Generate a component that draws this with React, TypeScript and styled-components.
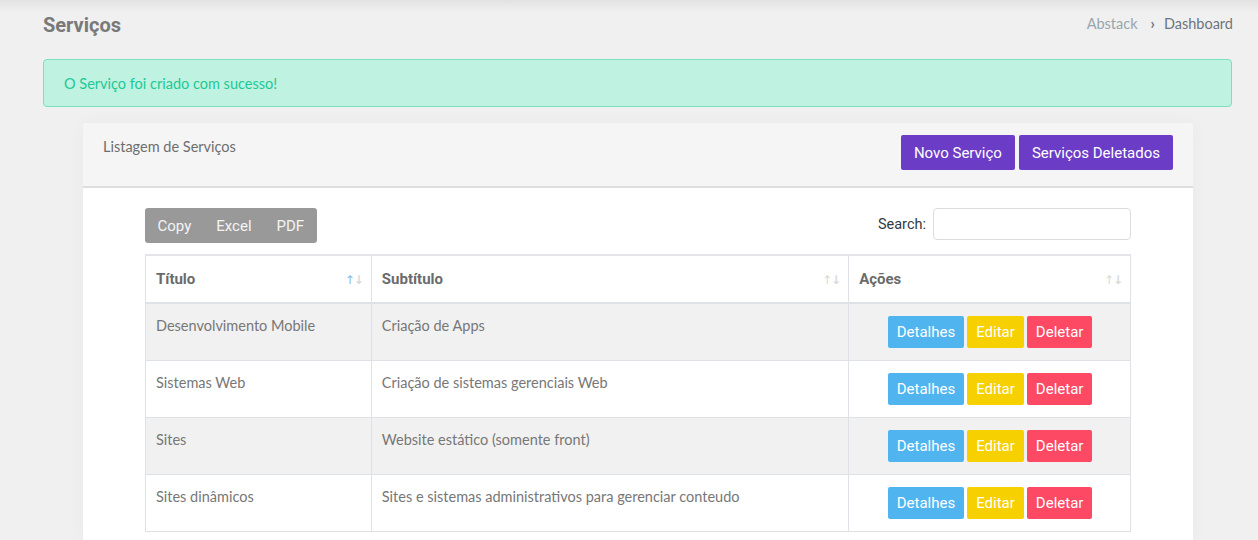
import React from "react";
import styled, { createGlobalStyle } from "styled-components";

const Global = createGlobalStyle`
  html, body { margin: 0; padding: 0; }
  body {
    background: linear-gradient(#e2e2e2 0px, #f0f0f0 12px, #f0f0f0 100%);
    font-family: Lato, "Noto Sans", sans-serif;
    min-height: 540px;
  }
`;

const Page = styled.div`
  padding: 0 26px 0 43px;
`;

const TitleRow = styled.div`
  display: flex;
  justify-content: space-between;
  align-items: center;
  height: 50px;
`;

const PageTitle = styled.h4`
  margin: 0;
  font-family: Roboto, sans-serif;
  font-weight: 700;
  font-size: 20px;
  color: #797979;
  line-height: 50px;
`;

const Crumbs = styled.div`
  display: flex;
  align-items: center;
  gap: 9px;
  font-size: 14.5px;
  margin-top: -4px;
  margin-right: -1px;
`;

const Crumb = styled.span<{ $active?: boolean }>`
  color: ${(p) => (p.$active ? "#6c757d" : "#98a6ad")};
`;

const Sep = styled.span`
  color: #6c757d;
  font-size: 15px;
  font-weight: 700;
  margin-left: 4px;
`;

const Alert = styled.div`
  margin-top: 9px;
  height: 48px;
  box-sizing: border-box;
  border: 1px solid #78e2bf;
  background: #bff2e0;
  border-radius: 4px;
  color: #1cc996;
  font-size: 14.5px;
  display: flex;
  align-items: center;
  padding: 0 20px;
`;

const Card = styled.div`
  margin: 16px 39px 0 40px;
  background: #fff;
  border-radius: 4px 4px 0 0;
  box-shadow: 0 0 20px rgba(0, 0, 0, 0.03);
  min-height: 420px;
`;

const CardHeader = styled.div`
  background: #f5f5f5;
  border-radius: 4px 4px 0 0;
  border-bottom: 2px solid #dedede;
  height: 65px;
  box-sizing: border-box;
  display: flex;
  justify-content: space-between;
  padding: 0 20px;
`;

const CardTitle = styled.div`
  color: #6e6e6e;
  font-size: 14.5px;
  padding-top: 15px;
`;

const HeaderActions = styled.div`
  display: flex;
  gap: 4px;
  padding-top: 12px;
`;

const PurpleBtn = styled.button`
  height: 35px;
  background: #6b3cc6;
  color: #fff;
  border: none;
  border-radius: 2px;
  font-family: Roboto, sans-serif;
  font-size: 15px;
  padding: 0 13px;
`;

const CardBody = styled.div`
  padding: 20px 62px 0;
`;

const Toolbar = styled.div`
  display: flex;
  justify-content: space-between;
  align-items: flex-start;
  height: 46px;
`;

const BtnGroup = styled.div`
  display: flex;
  background: #999;
  border-radius: 3px;
  height: 35px;
`;

const GroupBtn = styled.button`
  background: transparent;
  border: none;
  color: #f4f4f4;
  font-family: Roboto, sans-serif;
  font-size: 15px;
  padding: 0 12.5px;
  height: 35px;
`;

const SearchLabel = styled.label`
  display: flex;
  align-items: center;
  gap: 7px;
  font-family: Roboto, sans-serif;
  font-size: 14.5px;
  color: #343a40;
`;

const SearchInput = styled.input`
  width: 198px;
  height: 32px;
  box-sizing: border-box;
  border: 1px solid #dcdcdc;
  border-radius: 4px;
  outline: none;
`;

const Table = styled.table`
  width: 100%;
  border-collapse: collapse;
  border: 1px solid #dee2e6;
  border-top: 2px solid #e4e5e8;
`;

const Th = styled.th<{ $w: number }>`
  width: ${(p) => p.$w}px;
  box-sizing: border-box;
  text-align: left;
  font-family: Roboto, sans-serif;
  font-weight: 700;
  font-size: 15px;
  color: #6b6b6b;
  height: 48px;
  padding: 0 10px;
  border: 1px solid #dee2e6;
  border-bottom: 2px solid #dee2e6;
  position: relative;
`;

const SortIcon = styled.span<{ $active?: boolean }>`
  position: absolute;
  right: 8px;
  top: 17px;
  font-size: 12px;
  letter-spacing: -1px;
  color: #d9d9d9;
  font-family: "DejaVu Sans", sans-serif;
  & > b {
    font-weight: normal;
    color: ${(p) => (p.$active ? "#8fb8e0" : "#d9d9d9")};
  }
`;

const Tr = styled.tr<{ $odd: boolean }>`
  background: ${(p) => (p.$odd ? "#f1f1f1" : "#fff")};
`;

const Td = styled.td`
  height: 57px;
  box-sizing: border-box;
  border: 1px solid #dee2e6;
  padding: 13px 10px 0;
  vertical-align: top;
  font-size: 14.5px;
  color: #777;
`;

const ActionCell = styled.td`
  height: 57px;
  box-sizing: border-box;
  border: 1px solid #dee2e6;
  vertical-align: middle;
  text-align: center;
  padding: 0 0 0 1px;
`;

const Actions = styled.div`
  display: inline-flex;
  gap: 3px;
`;

const ActionBtn = styled.button<{ $bg: string }>`
  height: 32px;
  background: ${(p) => p.$bg};
  border: none;
  border-radius: 2px;
  color: #fff;
  font-family: Roboto, sans-serif;
  font-size: 15px;
  padding: 0 9px;
`;

const rows = [
  ["Desenvolvimento Mobile", "Criação de Apps"],
  ["Sistemas Web", "Criação de sistemas gerenciais Web"],
  ["Sites", "Website estático (somente front)"],
  ["Sites dinâmicos", "Sites e sistemas administrativos para gerenciar conteudo"],
];

export default function App() {
  return (
    <>
      <Global />
      <Page>
        <TitleRow>
          <PageTitle>Serviços</PageTitle>
          <Crumbs>
            <Crumb>Abstack</Crumb>
            <Sep>›</Sep>
            <Crumb $active>Dashboard</Crumb>
          </Crumbs>
        </TitleRow>
        <Alert>O Serviço foi criado com sucesso!</Alert>
        <Card>
          <CardHeader>
            <CardTitle>Listagem de Serviços</CardTitle>
            <HeaderActions>
              <PurpleBtn>Novo Serviço</PurpleBtn>
              <PurpleBtn>Serviços Deletados</PurpleBtn>
            </HeaderActions>
          </CardHeader>
          <CardBody>
            <Toolbar>
              <BtnGroup>
                <GroupBtn>Copy</GroupBtn>
                <GroupBtn>Excel</GroupBtn>
                <GroupBtn>PDF</GroupBtn>
              </BtnGroup>
              <SearchLabel>
                Search:
                <SearchInput type="search" />
              </SearchLabel>
            </Toolbar>
            <Table>
              <thead>
                <tr>
                  <Th $w={226}>
                    Título
                    <SortIcon $active>
                      <b>↑</b>↓
                    </SortIcon>
                  </Th>
                  <Th $w={478}>
                    Subtítulo
                    <SortIcon>
                      <b>↑</b>↓
                    </SortIcon>
                  </Th>
                  <Th $w={282}>
                    Ações
                    <SortIcon>
                      <b>↑</b>↓
                    </SortIcon>
                  </Th>
                </tr>
              </thead>
              <tbody>
                {rows.map((r, i) => (
                  <Tr key={i} $odd={i % 2 === 0}>
                    <Td>{r[0]}</Td>
                    <Td>{r[1]}</Td>
                    <ActionCell>
                      <Actions>
                        <ActionBtn $bg="#50b5ef">Detalhes</ActionBtn>
                        <ActionBtn $bg="#f7d000">Editar</ActionBtn>
                        <ActionBtn $bg="#fd4964">Deletar</ActionBtn>
                      </Actions>
                    </ActionCell>
                  </Tr>
                ))}
              </tbody>
            </Table>
          </CardBody>
        </Card>
      </Page>
    </>
  );
}
